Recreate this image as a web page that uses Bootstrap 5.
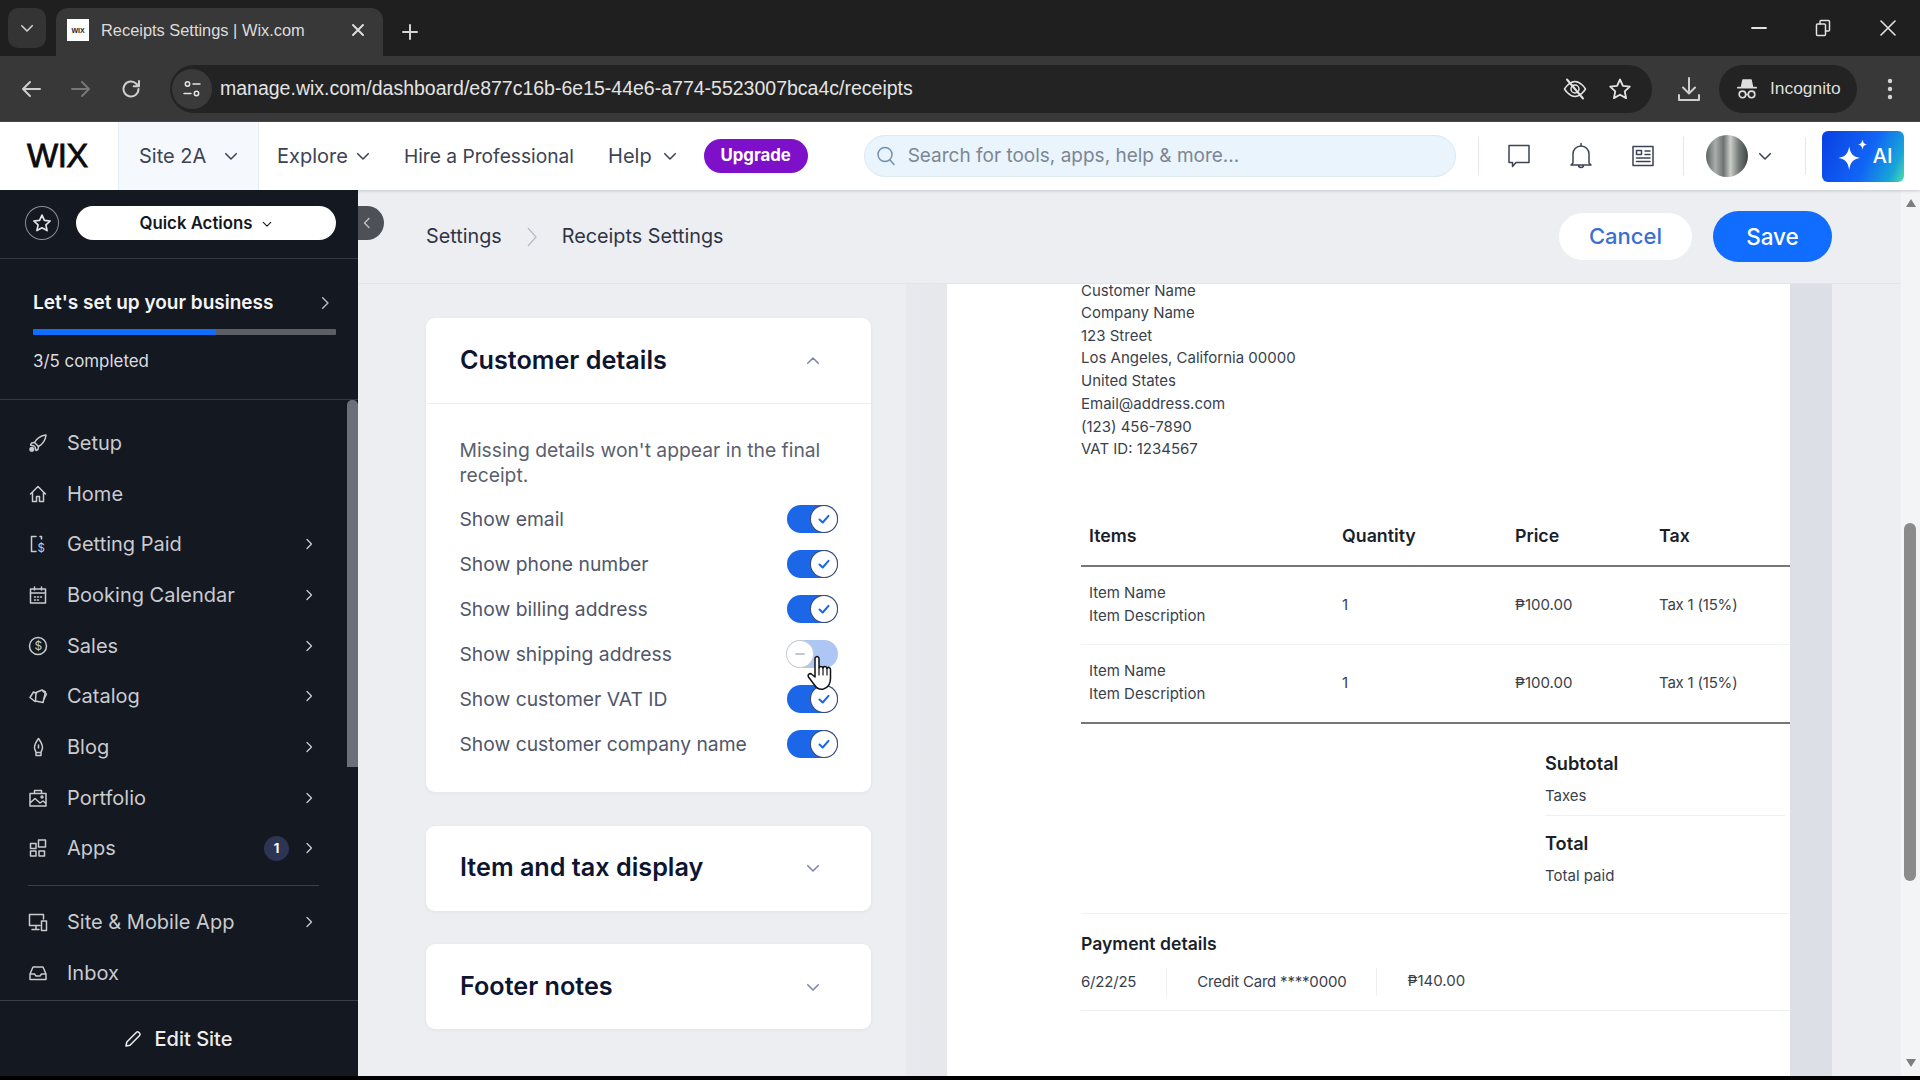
<!DOCTYPE html>
<html lang="en">
<head>
<meta charset="utf-8">
<title>Receipts Settings | Wix.com</title>
<link href="https://cdn.jsdelivr.net/npm/bootstrap@5.3.0/dist/css/bootstrap.min.css" rel="stylesheet">
<style>
html,body{height:100%;margin:0}
body{background:#000;font-family:Inter,"Noto Sans",sans-serif;color:#0d1530;width:1920px;height:1080px;overflow:hidden}
svg{display:block;flex:none}
.ic{fill:none;stroke:currentColor;stroke-width:1.5;stroke-linecap:round;stroke-linejoin:round}

/* browser chrome */
.tabstrip{height:56px;background:#1f1f1f;padding:8px 0 0 8px;font-family:"Liberation Sans",sans-serif}
.tabsearch{width:38px;height:40px;background:#343434;border-radius:10px;color:#d5d5d5}
.chrometab{width:327px;height:48px;margin-left:10px;background:#383838;border-radius:12px 12px 0 0;padding:0 18px 4px 11px;color:#dcdcdc;font-size:16.400px}
.favicon{width:22px;height:22px;background:#fff;color:#222;font:700 7px "Liberation Sans",sans-serif;margin-right:12px}
.newtab{margin-left:18px;color:#d5d5d5}
.winctl{color:#e2e2e2;margin-top:-8px}
.winbtn{width:64.5px;height:56px}
.toolbar{height:66px;background:#383838;color:#cfcfcf;font-family:"Liberation Sans",sans-serif;border-bottom:1px solid #4b4b4b;padding-left:6px}
.navbtn{width:50px}
.navdim{color:#777}
.omni{margin-left:14px;width:1482px;height:48px;background:#232323;border-radius:24px;color:#e4e4e4;font-size:19.500px;padding-right:20px}
.siteinfo{width:40px;height:40px;margin-left:2px;border-radius:50%;background:#3a3a3a;margin-right:8px}
.eyeoff{margin-right:20px}
.dltool{margin-left:25px}
.incog{margin-left:18px;width:138px;height:48px;border-radius:24px;background:#232323;padding-left:18px;gap:13px;font-size:17.400px;color:#dedede}
.dotsbox{width:60px}

/* wix header */
.wixbar{height:68px;background:#fff;box-shadow:0 1px 3px rgba(22,45,61,.2);position:relative;z-index:3;color:#3c4354;font-size:20px}
.wixlogo{width:118px;padding-left:27px;font:400 33px "Liberation Sans",sans-serif;-webkit-text-stroke:.8px #0b0b0b;color:#0b0b0b;letter-spacing:-.5px}
.sitebox{width:141px;height:100%;background:#f5f9fd;border:solid #e6edf3;border-width:0 1px;padding-left:20px;gap:18px}
.wixnav{margin-left:18px}
.hirelink{margin-left:34px;font-size:19.200px}
.helplink{margin-left:34px;gap:11px}
.upgrade{margin-left:27px;width:104px;height:34px;border-radius:17px;background:#7e10c9;color:#fff;font-weight:700;font-size:16.800px}
.searchbox{margin-left:56px;width:592px;height:42px;border-radius:21px;background:#e9f4fd;border:1px solid #dbe9f5;padding-left:11px;gap:12px;color:#7d8692;font-size:19px}
.searchglass{color:#7191b0}
.vsep{width:1px;height:38px;background:#e3e6ea}
.sepa{margin-left:22.500px}
.sepb{margin-left:28px}
.sepc{margin-left:33px}
.headicons{gap:38px;margin-left:28px}
.avatarpic{width:42px;height:42px;border-radius:50%;margin-left:22px;background:linear-gradient(90deg,#5b625f 0,#a9aeac 22%,#6d7370 42%,#c9cecb 58%,#747a78 78%,#3f4543 100%)}
.avatarchev{margin-left:10px}
.aibtn{width:82px;height:51px;margin-left:16px;border-radius:6px;background:linear-gradient(115deg,#0b3fe3 0,#1165f5 55%,#18a6d8 85%,#4fe0a8 100%);color:#fff;font-weight:500;font-size:20px;gap:1px}

/* sidebar */
.stage{height:886px}
.sidenav{width:358px;flex:none;background:#141821;position:relative;color:#c6c8cd;font-size:20px}
.sidetop{height:69px;padding:16px 22px 0 25px;border-bottom:1px solid #33373f;gap:17px}
.favcircle{width:34px;height:34px;border-radius:50%;border:1.5px solid #8d9096;color:#e5e6e8}
.quickbtn{width:261px;height:34px;border-radius:17px;background:#fff;color:#131720;font-size:16.800px;font-weight:600;gap:10px;padding-top:2px}
.setupbox{height:141px;padding:32px 22px 0 33px;border-bottom:1px solid #33373f;color:#fff}
.setuptitle{font-size:19px;font-weight:600;line-height:24px;color:#f4f4f5}
.setupchev{color:#b5b7bc}
.setupbar{height:6px;margin-top:14px;background:#5c5f66;border-radius:1px}
.setupfill{height:100%;background:#116dff;border-radius:1px}
.setupcount{font-size:16.900px;margin-top:14px;line-height:24px;color:#dcdde0}
.menuwrap{padding:17.500px 0 0 0;position:relative}
.menuitem{height:50.700px;padding-left:28px;padding-right:43px;color:#c9cbd0;font-size:20px}
.menuicon{width:39px}
.menucount{width:25px;height:25px;border-radius:50%;background:#2e3454;color:#fff;font-size:13px;font-weight:700;margin-right:14px}
.menusep{height:1px;background:#3a3f4b;margin:11px 39px 11px 28px}
.sidescroll{position:absolute;right:0;top:0;width:11px;height:367px;border-radius:5px 5px 0 0;background:#6b6f77}
.editfoot{height:76px;border-top:1px solid #3a3e46;color:#eceded;font-size:20px;font-weight:500;gap:13px;padding-right:2px}
.collapser{position:absolute;left:358px;top:16px;width:26px;height:34px;background:#4d5056;border-radius:0 17px 17px 0;color:#c4c6c9;z-index:2;padding-right:8px}
.flipx{transform:scaleX(-1)}
.menuarea{height:600px;overflow:hidden}

/* main */
.mainarea{flex:1;background:#eceef2;min-width:0}
.topline{height:94px;border-bottom:1px solid #e3e5e9;padding:0 69px 0 68px;font-size:19.800px;color:#2e3546}
.crumbsep{margin:0 23px 0 23px;color:#b7bcc6}
.cancelbtn{width:133px;height:47px;border-radius:24px;background:#fff;color:#3a6fd0;font-size:22px;margin-right:21px;font-weight:500}
.savebtn{width:119px;height:51px;border-radius:26px;background:#116dff;color:#fff;font-size:22.500px;font-weight:500}
.workrow{height:792px}
.leftpane{width:548px;padding:34px 35px 0 68px;flex:none}
.setcard{background:#fff;border-radius:9px;border:0;box-shadow:0 1px 4px rgba(22,45,61,.05);margin-bottom:33.500px}
.setcardhead{height:85px;padding:0 51px 0 34px}
.setcardtitle{font-size:25.200px;font-weight:600;color:#0d1530;line-height:1}
.chev{color:#7e85a8}
.setcardbody{border-top:1px solid #eef0f3;padding:34px 33px 26px 33.500px;font-size:19.300px;color:#50566a}
.setnote{line-height:25px;margin-bottom:8px;color:#5a5f70}
.setrow{height:45px;position:relative}
.setlabel{padding-top:2px}
.swt{width:51px;height:28px;border-radius:14px;background:#1c66e8;position:relative;flex:none}
.swt::after{content:"";position:absolute;right:1px;top:1px;width:26px;height:26px;border-radius:50%;background:#fff;box-shadow:0 0 0 1px #3e4a70}
.swt svg{position:absolute;right:7px;top:7px;z-index:1;color:#1c66e8}
.swtoff{background:#aec6f4}
.swtoff::after{right:auto;left:0;box-shadow:0 0 0 1px #c9ccd2}
.swtoff svg{right:auto;left:6px;color:#c4c7ce;top:7px}
.handcur{position:absolute;left:346px;top:23px;z-index:4}

.previewband{width:926px;flex:none;background:linear-gradient(90deg,#e7e9ed 0,#dcdfe5 60%);padding:0 42px 0 41px}
.paper{background:#fff;height:100%;color:#3a3f4c;font-size:15px;width:843px;padding-left:134px}
.addr{line-height:22.740px;height:239px}
.addrfirst{line-height:14px;margin-bottom:4px}
.rhead,.ritem{display:grid;grid-template-columns:253px 173px 144px 1fr;padding-left:8px}
.rhead{font-size:17.800px;font-weight:600;color:#1b1f2a;border-bottom:2px solid #777;height:43.500px}
.ritem{align-items:center;height:78px;line-height:23px;border-bottom:1px solid #f2f3f5;padding-bottom:1.500px}
.ritemlast{border-bottom:2px solid #777;height:79px}
.taxcell{letter-spacing:-.2px}
.totals{margin-left:464px;padding-top:26px}
.ttlabel{font-size:18.200px;font-weight:600;color:#1b1f2a;line-height:26px}
.ttsub{line-height:22px;margin-top:9px}
.ttsep{height:1px;background:#eef0f2;margin:8px 5px 14px 0}
.paysec{border-top:1px solid #eef0f2;margin-top:26px;padding-top:17px}
.paytitle{font-size:17.600px;font-weight:600;color:#1b1f2a;line-height:26px}
.payrow{height:54px;border-bottom:1px solid #eef0f2;padding-bottom:3px}
.paycell{padding-right:30px;margin-right:30px;border-right:1px solid #eef0f2;line-height:28px;letter-spacing:-.2px}
.rightgap{flex:1}
.pagescroll{width:19px;background:#f3f4f6;color:#7d7d7d;flex:none;padding:8px 0}
.pagethumb{width:12px;height:358px;background:#8b8b8b;border-radius:6px;margin:315px 0 177px 3px}
.blackstrip{height:4px;background:#000}
</style>
</head>
<body class="d-flex flex-column">

<svg width="0" height="0" class="position-absolute">
  <symbol id="chr" viewBox="0 0 12 12"><path d="M4 1.500 8.500 6 4 10.500" fill="none" stroke="currentColor" stroke-width="1.300" stroke-linecap="round" stroke-linejoin="round"/></symbol>
  <symbol id="chd" viewBox="0 0 12 12"><path d="M1.500 4 6 8.500 10.500 4" fill="none" stroke="currentColor" stroke-width="1.300" stroke-linecap="round" stroke-linejoin="round"/></symbol>
  <symbol id="chu" viewBox="0 0 12 12"><path d="M1.500 8 6 3.500 10.500 8" fill="none" stroke="currentColor" stroke-width="1.300" stroke-linecap="round" stroke-linejoin="round"/></symbol>
  <symbol id="chk" viewBox="0 0 14 14"><path d="M2.500 7.500 5.700 10.500 11.500 3.800" fill="none" stroke="currentColor" stroke-width="2" stroke-linecap="round" stroke-linejoin="round"/></symbol>
</svg>

<!-- Tab strip -->
<div class="tabstrip d-flex align-items-start">
  <div class="tabsearch d-flex align-items-center justify-content-center"><svg width="14" height="14"><use href="#chd"/></svg></div>
  <div class="chrometab d-flex align-items-center">
    <div class="favicon d-flex align-items-center justify-content-center">WIX</div>
    <span class="flex-grow-1">Receipts Settings | Wix.com</span>
    <svg width="14" height="14" viewBox="0 0 14 14" class="ic"><path d="M2 2 12 12M12 2 2 12" stroke-width="2"/></svg>
  </div>
  <div class="newtab align-self-center d-flex"><svg width="18" height="18" viewBox="0 0 18 18" class="ic"><path d="M9 2v14M2 9h14" stroke-width="2"/></svg></div>
  <div class="winctl d-flex ms-auto">
    <div class="winbtn d-flex align-items-center justify-content-center"><svg width="16" height="4" viewBox="0 0 16 4" class="ic"><path d="M1 2h14" stroke-width="1.800"/></svg></div>
    <div class="winbtn d-flex align-items-center justify-content-center"><svg width="16" height="18" viewBox="0 0 16 18" class="ic"><rect x="1.500" y="5" width="9" height="11.500" rx="1"/><path d="M5 5V2.500a1 1 0 0 1 1-1h7.500a1 1 0 0 1 1 1V11a1 1 0 0 1-1 1h-3"/></svg></div>
    <div class="winbtn d-flex align-items-center justify-content-center"><svg width="16" height="16" viewBox="0 0 16 16" class="ic"><path d="M1 1 15 15M15 1 1 15" stroke-width="1.600"/></svg></div>
  </div>
</div>

<!-- Toolbar -->
<div class="toolbar d-flex align-items-center">
  <div class="navbtn d-flex justify-content-center"><svg width="22" height="20" viewBox="0 0 22 20" class="ic"><path d="M20 10H3M10 3 3 10l7 7" stroke-width="2"/></svg></div>
  <div class="navbtn navdim d-flex justify-content-center"><svg width="22" height="20" viewBox="0 0 22 20" class="ic"><path d="M2 10h17M12 3l7 7-7 7" stroke-width="2"/></svg></div>
  <div class="navbtn d-flex justify-content-center"><svg width="22" height="22" viewBox="0 0 22 22" class="ic"><path d="M18.500 11a7.500 7.500 0 1 1-2.200-5.300L19 8.300M19 3v5.300h-5.300" stroke-width="2"/></svg></div>
  <div class="omni d-flex align-items-center">
    <div class="siteinfo d-flex align-items-center justify-content-center"><svg width="20" height="20" viewBox="0 0 20 20" class="ic"><circle cx="5.500" cy="5" r="2.200"/><path d="M11 5h7M2 14.500h7"/><circle cx="14.500" cy="14.500" r="2.200"/></svg></div>
    <span class="flex-grow-1">manage.wix.com/dashboard/e877c16b-6e15-44e6-a774-5523007bca4c/receipts</span>
    <svg width="26" height="26" viewBox="0 0 26 26" class="ic eyeoff"><path d="M2.500 13S7 5.500 13 5.500 23.500 13 23.500 13 19 20.500 13 20.500 2.500 13 2.500 13Z"/><circle cx="13" cy="13" r="4"/><path d="M5 3.500 21 22.500" stroke-width="2"/></svg>
    <svg width="24" height="24" viewBox="0 0 24 24" class="ic"><path d="m12 2.500 2.900 6.300 6.900.8-5.100 4.700 1.400 6.800-6.100-3.400-6.100 3.400 1.400-6.800L2.200 9.600l6.900-.8Z" stroke-width="1.800"/></svg>
  </div>
  <div class="dltool"><svg width="24" height="26" viewBox="0 0 24 26" class="ic"><path d="M12 2v15M6 11.500l6 6 6-6M2 19v5h20v-5" stroke-width="2"/></svg></div>
  <div class="incog d-flex align-items-center">
    <svg width="20" height="24" viewBox="0 0 22 24" class="ic"><path d="M6.500 2h9l1.500 7H5Z" fill="currentColor"/><path d="M1 10.500h20" stroke-width="2"/><circle cx="6" cy="18" r="3.600" stroke-width="1.800"/><circle cx="16" cy="18" r="3.600" stroke-width="1.800"/><path d="M9.500 18h3"/></svg>
    <span>Incognito</span>
  </div>
  <div class="dotsbox ms-auto d-flex justify-content-center"><svg width="6" height="24" viewBox="0 0 6 24"><circle cx="3" cy="4" r="2.200" fill="#d5d5d5"/><circle cx="3" cy="12" r="2.200" fill="#d5d5d5"/><circle cx="3" cy="20" r="2.200" fill="#d5d5d5"/></svg></div>
</div>

<!-- Wix header -->
<header class="wixbar d-flex align-items-center">
  <div class="wixlogo">WIX</div>
  <div class="sitebox d-flex align-items-center"><span>Site 2A</span><svg width="14" height="14"><use href="#chd"/></svg></div>
  <div class="wixnav d-flex align-items-center gap-2"><span>Explore</span><svg width="14" height="14"><use href="#chd"/></svg></div>
  <div class="hirelink">Hire a Professional</div>
  <div class="helplink d-flex align-items-center"><span>Help</span><svg width="14" height="14"><use href="#chd"/></svg></div>
  <div class="upgrade d-flex align-items-center justify-content-center">Upgrade</div>
  <div class="searchbox d-flex align-items-center">
    <svg width="20" height="22" viewBox="0 0 20 22" class="ic searchglass"><circle cx="9" cy="9.500" r="7"/><path d="m14 15 4 4.500"/></svg>
    <span>Search for tools, apps, help &amp; more...</span>
  </div>
  <div class="vsep sepa"></div>
  <div class="headicons d-flex align-items-center">
    <svg width="24" height="26" viewBox="0 0 24 26" class="ic"><path d="M2 2.500h20v17H9l-3.500 4v-4H2Z"/></svg>
    <svg width="24" height="28" viewBox="0 0 24 28" class="ic"><path d="M12 1.500v2.500M4 21V12a8 8 0 0 1 16 0v9l2 2H2ZM9.500 23a2.500 2.500 0 0 0 5 0"/></svg>
    <svg width="24" height="24" viewBox="0 0 24 24" class="ic"><rect x="2" y="2.500" width="20" height="19"/><path d="M5.500 6.500h5v4h-5ZM14 7h5M14 10.500h5M5.500 14h13.500M5.500 17.500h13.500"/></svg>
  </div>
  <div class="vsep sepb"></div>
  <div class="avatarpic"></div>
  <svg class="avatarchev" width="14" height="14"><use href="#chd"/></svg>
  <div class="vsep sepc"></div>
  <div class="aibtn d-flex align-items-center justify-content-center">
    <svg width="38" height="38" viewBox="0 0 30 30"><path d="M12 7.500c1 6 3 8 8.500 9-5.500 1-7.500 3-8.500 9.500-1-6.500-3-8.500-8.500-9.500C9 15.500 11 13.500 12 7.500Z" fill="#fff"/><path d="M22.500 2c.4 2.600 1.300 3.500 3.500 4-2.200.5-3.100 1.400-3.500 4-.4-2.600-1.300-3.500-3.500-4 2.200-.5 3.100-1.400 3.500-4Z" fill="#fff"/></svg>
    <span>AI</span>
  </div>
</header>

<!-- Stage -->
<div class="stage d-flex">
  <aside class="sidenav d-flex flex-column">
    <div class="collapser d-flex align-items-center justify-content-center"><svg class="flipx" width="12" height="12"><use href="#chr"/></svg></div>
    <div class="sidetop d-flex align-items-start">
      <div class="favcircle d-flex align-items-center justify-content-center"><svg width="20" height="20" viewBox="0 0 24 24" class="ic"><path d="m12 2.500 2.900 6.300 6.900.8-5.100 4.700 1.400 6.800-6.100-3.400-6.100 3.400 1.400-6.800L2.200 9.600l6.900-.8Z" stroke-width="2"/></svg></div>
      <div class="quickbtn d-flex align-items-center justify-content-center"><span>Quick Actions</span><svg width="10" height="10"><use href="#chd"/></svg></div>
    </div>
    <div class="setupbox">
      <div class="d-flex align-items-center justify-content-between"><span class="setuptitle">Let's set up your business</span><svg width="14" height="14" class="me-1 setupchev"><use href="#chr"/></svg></div>
      <div class="setupbar"><div class="setupfill" style="width:60.300%"></div></div>
      <div class="setupcount">3/5 completed</div>
    </div>
    <div class="menuarea menuwrap">
      <div class="sidescroll"></div>
      <div class="menuitem d-flex align-items-center"><span class="menuicon"><svg width="20" height="20" viewBox="0 0 20 20" class="ic"><path d="M18 2c-5 .5-9 3-11.500 7.500L10.500 13.500C15 11 17.500 7 18 2Z"/><path d="M6.500 9.500 3.500 10l-1 2 3.500 1M10.500 13.500 10 16.500l-2 1-1-3.500"/><circle cx="3.800" cy="16.200" r="1.800" fill="currentColor"/></svg></span>Setup</div>
      <div class="menuitem d-flex align-items-center"><span class="menuicon"><svg width="20" height="20" viewBox="0 0 20 20" class="ic"><path d="M2.500 10 10 2.500 17.500 10M4.500 8.500V17.500h4v-5h3v5h4V8.500"/></svg></span>Home</div>
      <div class="menuitem d-flex align-items-center"><span class="menuicon"><svg width="20" height="20" viewBox="0 0 20 20" class="ic"><path d="M8 2.500H3.500v15H8M12 2.500h1.500V5"/><text x="9.500" y="17.500" font-family="Inter" font-size="11.500" fill="currentColor" stroke="none">$</text></svg></span><span class="flex-grow-1">Getting Paid</span><svg width="12" height="12"><use href="#chr"/></svg></div>
      <div class="menuitem d-flex align-items-center"><span class="menuicon"><svg width="20" height="20" viewBox="0 0 20 20" class="ic"><rect x="2.500" y="4" width="15" height="14"/><path d="M2.500 8h15M6.500 2v3M13.500 2v3M6.500 12h1M9.500 12h1M12.500 12h1M6.500 15h1M9.500 15h1"/></svg></span><span class="flex-grow-1">Booking Calendar</span><svg width="12" height="12"><use href="#chr"/></svg></div>
      <div class="menuitem d-flex align-items-center"><span class="menuicon"><svg width="20" height="20" viewBox="0 0 20 20" class="ic"><circle cx="10" cy="10" r="8.500"/><text x="6.600" y="14.300" font-family="Inter" font-size="12" fill="currentColor" stroke="none">$</text></svg></span><span class="flex-grow-1">Sales</span><svg width="12" height="12"><use href="#chr"/></svg></div>
      <div class="menuitem d-flex align-items-center"><span class="menuicon"><svg width="20" height="20" viewBox="0 0 20 20" class="ic"><path d="M7 15.500 2 11.500l3.500-5.500 3 1.500M8 6.500l6-2.500 3.500 2-2.500 10.500-7.500-1.500Z"/><path d="M15 5.500 18.500 8l-2.500 5"/></svg></span><span class="flex-grow-1">Catalog</span><svg width="12" height="12"><use href="#chr"/></svg></div>
      <div class="menuitem d-flex align-items-center"><span class="menuicon"><svg width="20" height="20" viewBox="0 0 20 20" class="ic"><path d="M10.500 1.500C8 5 6.500 8 6.500 10.500c0 2 1.300 3.500 1.500 5h5c.2-1.500 1.500-3 1.500-5C14.500 8 13 5 10.500 1.500ZM8 15.500v3h5v-3M10.500 8v3"/></svg></span><span class="flex-grow-1">Blog</span><svg width="12" height="12"><use href="#chr"/></svg></div>
      <div class="menuitem d-flex align-items-center"><span class="menuicon"><svg width="20" height="20" viewBox="0 0 20 20" class="ic"><path d="M2 5.500h16v12.500H2ZM6.500 5.500V2.500h7v3M2 15l5-4.500 5 4.500 3-2 3 2.500"/><circle cx="14" cy="9" r="1"/></svg></span><span class="flex-grow-1">Portfolio</span><svg width="12" height="12"><use href="#chr"/></svg></div>
      <div class="menuitem d-flex align-items-center"><span class="menuicon"><svg width="20" height="20" viewBox="0 0 20 20" class="ic"><rect x="2.500" y="5.500" width="5.500" height="5"/><rect x="2.500" y="13" width="5.500" height="5"/><rect x="11" y="13" width="5.500" height="5"/><rect x="10.500" y="2" width="7" height="7"/></svg></span><span class="flex-grow-1">Apps</span><span class="menucount d-flex align-items-center justify-content-center">1</span><svg width="12" height="12"><use href="#chr"/></svg></div>
      <div class="menusep"></div>
      <div class="menuitem d-flex align-items-center"><span class="menuicon"><svg width="20" height="20" viewBox="0 0 20 20" class="ic"><path d="M12 13.500H1.500v-11h14V7M8 13.500v3.500M4 17.500h7"/><rect x="13.500" y="9" width="5" height="9.500"/></svg></span><span class="flex-grow-1">Site &amp; Mobile App</span><svg width="12" height="12"><use href="#chr"/></svg></div>
      <div class="menuitem d-flex align-items-center"><span class="menuicon"><svg width="20" height="20" viewBox="0 0 20 20" class="ic"><path d="M2 11 5 4h10l3 7v5.500H2ZM2 11h4.500l1.500 2h4l1.500-2H18"/></svg></span>Inbox</div>
    </div>
    <div class="editfoot d-flex align-items-center justify-content-center mt-auto">
      <svg width="18" height="18" viewBox="0 0 18 18" class="ic"><path d="M2 16l.8-4L12.500 2.300a1.500 1.500 0 0 1 2.100 0l1 1a1.500 1.500 0 0 1 0 2.100L6 15.200Z"/></svg>
      <span>Edit Site</span>
    </div>
  </aside>

  <main class="mainarea d-flex flex-column">
    <div class="topline d-flex align-items-center">
      <span>Settings</span>
      <svg class="crumbsep" width="14" height="22" viewBox="0 0 14 22"><path d="M3 2 11 11 3 20" fill="none" stroke="currentColor" stroke-width="1.300"/></svg>
      <span>Receipts Settings</span>
      <div class="cancelbtn d-flex align-items-center justify-content-center ms-auto">Cancel</div>
      <div class="savebtn d-flex align-items-center justify-content-center">Save</div>
    </div>
    <div class="workrow d-flex">
      <div class="leftpane">
        <div class="card setcard">
          <div class="setcardhead d-flex align-items-center justify-content-between"><span class="setcardtitle">Customer details</span><svg class="chev" width="14" height="14"><use href="#chu"/></svg></div>
          <div class="setcardbody">
            <div class="setnote">Missing details won't appear in the final receipt.</div>
            <div class="setrow d-flex align-items-center justify-content-between"><span class="setlabel">Show email</span><span class="swt"><svg width="14" height="14"><use href="#chk"/></svg></span></div>
            <div class="setrow d-flex align-items-center justify-content-between"><span class="setlabel">Show phone number</span><span class="swt"><svg width="14" height="14"><use href="#chk"/></svg></span></div>
            <div class="setrow d-flex align-items-center justify-content-between"><span class="setlabel">Show billing address</span><span class="swt"><svg width="14" height="14"><use href="#chk"/></svg></span></div>
            <div class="setrow d-flex align-items-center justify-content-between"><span class="setlabel">Show shipping address</span><span class="swt swtoff"><svg width="14" height="14" viewBox="0 0 14 14"><path d="M3 7h8" stroke="currentColor" stroke-width="2" stroke-linecap="round"/></svg></span>
              <svg class="handcur" width="28" height="38" viewBox="0 0 28 38"><path d="M10 3c1.400-1 3 0 3 1.500V14c.3-2 3.500-2 4 0 .5-2 3.500-2 4 .5.5-1.700 3.500-1.500 3.500 1v9c0 5-2.500 9-7 10.500-4 1-7-1-9-4L2.500 23c-1.300-2.500 1.500-4.500 3.500-2.500L9 23V4.500c0-.5.400-1.200 1-1.500Z" fill="#fff" stroke="#111" stroke-width="1.500" stroke-linejoin="round"/><path d="M13 14v7M17 14v7M21 14.500V21" stroke="#111" stroke-width="1.200" stroke-linecap="round"/></svg>
            </div>
            <div class="setrow d-flex align-items-center justify-content-between"><span class="setlabel">Show customer VAT ID</span><span class="swt"><svg width="14" height="14"><use href="#chk"/></svg></span></div>
            <div class="setrow d-flex align-items-center justify-content-between"><span class="setlabel">Show customer company name</span><span class="swt"><svg width="14" height="14"><use href="#chk"/></svg></span></div>
          </div>
        </div>
        <div class="card setcard">
          <div class="setcardhead d-flex align-items-center justify-content-between"><span class="setcardtitle">Item and tax display</span><svg class="chev" width="14" height="14"><use href="#chd"/></svg></div>
        </div>
        <div class="card setcard">
          <div class="setcardhead d-flex align-items-center justify-content-between"><span class="setcardtitle">Footer notes</span><svg class="chev" width="14" height="14"><use href="#chd"/></svg></div>
        </div>
      </div>
      <div class="previewband">
        <div class="paper">
          <div class="addr"><div class="addrfirst">Customer Name</div>Company Name<br>123 Street<br>Los Angeles, California 00000<br>United States<br>Email@address.com<br>(123) 456-7890<br>VAT ID: 1234567</div>
          <div class="rhead"><span>Items</span><span>Quantity</span><span>Price</span><span>Tax</span></div>
          <div class="ritem"><span>Item Name<br>Item Description</span><span>1</span><span>₱100.00</span><span class="taxcell">Tax 1 (15%)</span></div>
          <div class="ritem ritemlast"><span>Item Name<br>Item Description</span><span>1</span><span>₱100.00</span><span class="taxcell">Tax 1 (15%)</span></div>
          <div class="totals">
            <div class="ttlabel">Subtotal</div>
            <div class="ttsub">Taxes</div>
            <div class="ttsep"></div>
            <div class="ttlabel">Total</div>
            <div class="ttsub">Total paid</div>
          </div>
          <div class="paysec">
            <div class="paytitle">Payment details</div>
            <div class="payrow d-flex align-items-center"><span class="paycell">6/22/25</span><span class="paycell">Credit Card ****0000</span><span>₱140.00</span></div>
          </div>
        </div>
      </div>
      <div class="rightgap"></div>
    </div>
  </main>

  <div class="pagescroll d-flex flex-column align-items-center">
    <svg width="12" height="10" viewBox="0 0 12 10"><path d="M6 1 11 9H1Z" fill="currentColor"/></svg>
    <div class="pagethumb align-self-start"></div>
    <svg width="12" height="10" viewBox="0 0 12 10"><path d="M6 9 11 1H1Z" fill="currentColor"/></svg>
  </div>
</div>
<div class="blackstrip"></div>
</body>
</html>
